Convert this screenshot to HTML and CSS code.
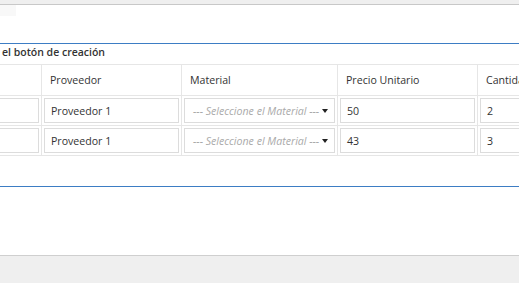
FILE: index.html
```html
<!DOCTYPE html>
<html lang="es">
<head>
<meta charset="utf-8">
<link rel="stylesheet" href="styles.css">
</head>
<body>
<div class="topbar"></div>
<div class="panel-head"><span class="ghost"></span></div>
<div class="section">
  <div class="section-title">el botón de creación</div>
  <div class="table-wrap">
    <table class="grid">
      <colgroup>
        <col class="c1"><col class="c2"><col class="c3"><col class="c4"><col class="c5">
      </colgroup>
      <thead>
        <tr><th></th><th>Proveedor</th><th>Material</th><th>Precio Unitario</th><th>Cantidad</th></tr>
      </thead>
      <tbody>
        <tr>
          <td><div class="input"></div></td>
          <td><div class="input">Proveedor 1</div></td>
          <td><div class="input select"><span class="ph">--- Seleccione el Material ---</span><span class="caret"></span></div></td>
          <td><div class="input">50</div></td>
          <td><div class="input">2</div></td>
        </tr>
        <tr>
          <td><div class="input"></div></td>
          <td><div class="input">Proveedor 1</div></td>
          <td><div class="input select"><span class="ph">--- Seleccione el Material ---</span><span class="caret"></span></div></td>
          <td><div class="input">43</div></td>
          <td><div class="input">3</div></td>
        </tr>
      </tbody>
    </table>
  </div>
</div>
<div class="after"></div>
<div class="footer"></div>
</body>
</html>
```
FILE: styles.css
```css
html, body {
  margin: 0;
  padding: 0;
  background: #fff;
  font-family: "Open Sans", "Noto Sans", sans-serif;
  color: #333;
  overflow: hidden;
  width: 519px;
  height: 283px;
}
.topbar {
  height: 4px;
  background: #efefef;
  border-bottom: 1px solid #c8c8c8;
}
.panel-head {
  height: 38px;
  border-bottom: 1px solid #3d7dc4;
}
.ghost {
  display: block;
  width: 16px;
  height: 11px;
  background: #f8f8f8;
}
.section {
  height: 142px;
  border-bottom: 1px solid #3d7dc4;
  overflow: hidden;
}
.section-title {
  font-size: 10.5px;
  font-weight: 600;
  color: #333;
  line-height: 14px;
  padding: 1px 0 0 2px;
  height: 19px;
  white-space: nowrap;
}
.table-wrap {
  margin-left: -60px;
  width: 580px;
  overflow: hidden;
}
.grid {
  border-collapse: collapse;
  table-layout: fixed;
  width: 640px;
  font-size: 10.6px;
}
.c1 { width: 101px; }
.c2 { width: 140px; }
.c3 { width: 156px; }
.c4 { width: 140px; }
.c5 { width: 103px; }
.grid th, .grid td {
  border: 1px solid #e6e6e6;
}
.grid th {
  height: 30px;
  padding: 0 8px;
  text-align: left;
  font-weight: 400;
  color: #333;
  white-space: nowrap;
}
.grid td {
  padding: 2px 2px;
}
.input {
  box-sizing: border-box;
  height: 25px;
  border: 1px solid #dcdcdc;
  padding: 0 6px;
  display: flex;
  align-items: center;
  white-space: nowrap;
  overflow: hidden;
  color: #333;
}
.select {
  justify-content: space-between;
  padding: 0 6px 0 8px;
}
.ph {
  color: #aaa;
  font-style: italic;
}
.caret {
  width: 0;
  height: 0;
  border-left: 3.5px solid transparent;
  border-right: 3.5px solid transparent;
  border-top: 4px solid #222;
}
.after {
  height: 68px;
  border-bottom: 1px solid #cfcfcf;
}
.footer {
  height: 40px;
  background: #efefef;
}
```
